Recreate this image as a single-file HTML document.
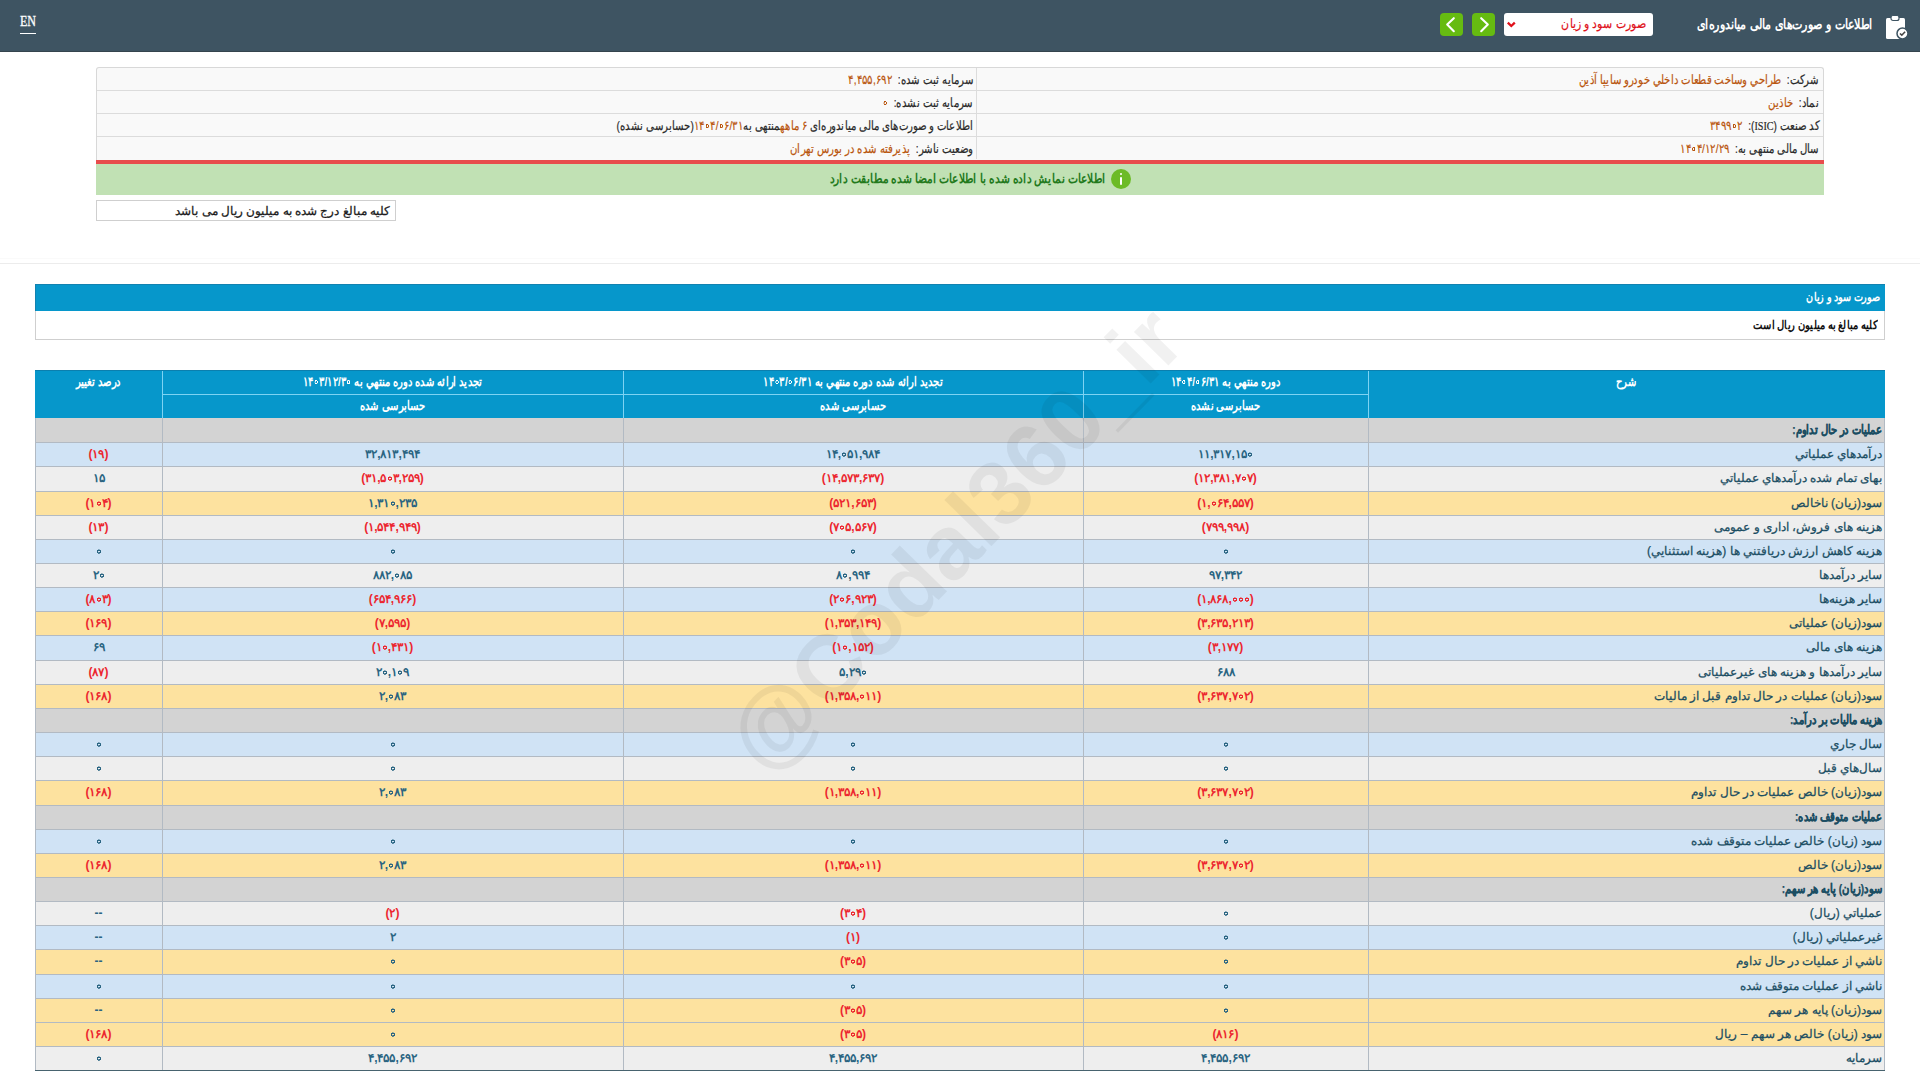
<!DOCTYPE html>
<html lang="fa"><head><meta charset="utf-8">
<style>
*{box-sizing:border-box;margin:0;padding:0}
html,body{width:1920px;height:1080px;overflow:hidden;background:#fff;font-family:"Liberation Sans",sans-serif;position:relative}
#hdr{position:absolute;left:0;top:0;width:1920px;height:52px;background:#3e5462;border-bottom:1px solid #35444d}
#en{position:absolute;left:20px;top:14px;font-family:"Liberation Serif",serif;color:#fff;font-size:14px;line-height:16px;transform:scaleX(0.86);transform-origin:0 50%;-webkit-text-stroke:0.3px #fff}
#enul{position:absolute;left:20px;top:32.5px;width:16px;height:1.6px;background:#fff}
#title{position:absolute;right:47px;top:13px;color:#fff;font-weight:bold;font-size:14px;line-height:22px;direction:rtl;white-space:nowrap;transform:scaleX(0.79);transform-origin:100% 50%}
#sel{position:absolute;left:1504px;top:13px;width:149px;height:23px;background:#fff;border-radius:3px}
#seltxt{position:absolute;right:7px;top:2px;color:#e0101a;-webkit-text-stroke:0.2px #e0101a;font-size:13px;line-height:18px;direction:rtl;white-space:nowrap;transform:scaleX(0.84);transform-origin:100% 50%}
.btn{position:absolute;top:13px;width:23px;height:23px;background:#66bb11;border-radius:4px}
.btn svg,#sel svg,#clip{position:absolute;left:0;top:0}
#info{position:absolute;left:96px;top:67px;width:1728px;height:93px;border:1px solid #d8d8d8;border-bottom:none;border-radius:3px 3px 0 0;background:#f9f9f9}
.irow{height:23px;border-top:1px solid #dcdcdc;position:relative}
.irow:first-child{border-top:none;height:22px}
.ic{position:absolute;top:0;height:100%;direction:rtl;white-space:nowrap;font-size:13px;line-height:24px;color:#2a2a2a;-webkit-text-stroke:0.2px #2a2a2a}
.ic .v{-webkit-text-stroke:0.2px #b9560f}
.ic span.t{display:inline-block;transform:scaleX(0.78);transform-origin:100% 50%}
.ic.r{left:879px;right:0;padding-right:4px;text-align:right;border-left:1px solid #dcdcdc}
.ic.l{left:0;width:879px;padding-right:3px;text-align:right}
.v{color:#b9560f}
#red{position:absolute;left:96px;top:160px;width:1728px;height:4px;background:#e84c4c}
#green{position:absolute;left:96px;top:164px;width:1728px;height:31px;background:#c1e1b4}
#gtxt{position:absolute;right:814px;top:168px;height:22px;color:#237a1c;font-weight:bold;font-size:13px;line-height:22px;direction:rtl;white-space:nowrap;transform:scaleX(0.82);transform-origin:100% 50%}
#gico{position:absolute;left:1111px;top:169px;width:20px;height:20px;border-radius:50%;background:#6cbb26}
#gico:before{content:"";position:absolute;left:9px;top:4px;width:2.4px;height:2.4px;background:#fff;border-radius:50%}
#gico:after{content:"";position:absolute;left:9px;top:8px;width:2.4px;height:8px;background:#fff;border-radius:1px}
#note{position:absolute;left:96px;top:200px;width:300px;height:21px;border:1px solid #cfcfcf;direction:rtl;text-align:right;padding-right:5px;font-size:12px;line-height:20px;color:#1a1a1a;-webkit-text-stroke:0.25px #1a1a1a}
#hr{position:absolute;left:0;top:263px;width:1920px;height:1px;background:#ececec}
#tbar{position:absolute;left:35px;top:284px;width:1850px;height:27px;background:#0697cb;border-top:1px solid #1282b0;border-left:1px solid #1282b0;color:#fff;font-weight:bold;direction:rtl;text-align:right;padding-right:5px;font-size:12px;line-height:25px}
#sub{position:absolute;left:35px;top:311px;width:1850px;height:29px;border:1px solid #cfcfcf;border-top:none;color:#111;font-weight:bold;direction:rtl;text-align:right;padding-right:6px;font-size:12px;line-height:28px}
#thead{position:absolute;left:35px;top:370px;width:1850px;height:48px;background:#0697cb;border-top:1px solid #0b7fae}
.hvl{position:absolute;top:371px;height:47px;width:1px;background:#7dd3f3}
.hhl{position:absolute;top:394px;height:1px;background:#7dd3f3}
.th{position:absolute;color:#fff;font-weight:bold;font-size:13px;line-height:22px;text-align:center;direction:rtl;white-space:nowrap;transform:scaleX(0.77)}
.tr{position:absolute;left:35px;width:1850px}
.td{position:absolute;top:0;height:100%;font-size:12px;line-height:24px;white-space:nowrap}
.td.d{text-align:right;padding-right:2px;color:#1a4d62;direction:rtl;-webkit-text-stroke:0.25px #1a4d62}
.td.d.b{font-weight:bold;font-size:13px;transform:scaleX(0.77);transform-origin:100% 50%}
.td.n{text-align:center;color:#2a6582;direction:ltr;font-weight:bold}
.td.r{color:#ec2730}
.hl{position:absolute;left:35px;width:1850px;height:1px;background:#b2bac3}
.hlb{position:absolute;left:35px;width:1850px;height:1px;background:#48636f}
.vl{position:absolute;width:1px;background:#b2bac3}
#wm{position:absolute;left:955px;top:539px;width:0;height:0}
#wm div{position:absolute;left:-400px;top:-60px;width:800px;text-align:center;font-family:"Liberation Sans",sans-serif;font-weight:bold;font-size:91px;line-height:120px;color:rgba(0,0,0,0.056);transform:rotate(-45.6deg);white-space:nowrap}
.z{-webkit-text-fill-color:transparent;-webkit-text-stroke:0;background:radial-gradient(circle at 48% 54%, transparent 0.8px, currentColor 1.1px, currentColor 1.9px, transparent 2.3px)}
</style></head><body>
<div id="hdr">
  <div id="en">EN</div><div id="enul"></div>
  <div id="title">اطلاعات و صورت‌های مالی میاندوره‌ای</div>
  <div id="sel"><svg width="149" height="23"><path d="M3.8 9.6 L7.3 13 L10.8 9.6" fill="none" stroke="#e0101a" stroke-width="2.3" stroke-linejoin="miter"/></svg><div id="seltxt">صورت سود و زیان</div></div>
  <div class="btn" style="left:1440px"><svg width="23" height="23"><path d="M13.8 5.2 L7.2 11.6 L13.8 18.2" fill="none" stroke="#fff" stroke-width="2.1" stroke-linecap="round" stroke-linejoin="round"/></svg></div>
  <div class="btn" style="left:1472px"><svg width="23" height="23"><path d="M9.2 5.2 L15.8 11.6 L9.2 18.2" fill="none" stroke="#fff" stroke-width="2.1" stroke-linecap="round" stroke-linejoin="round"/></svg></div>
  <svg id="clip" style="left:1884px;top:13px" width="26" height="28" viewBox="0 0 26 28">
    <rect x="2" y="5" width="19" height="21" rx="1.5" fill="#fff"/>
    <rect x="7" y="2.5" width="8" height="5" rx="2" fill="#fff" stroke="#3e5462" stroke-width="1.2"/>
    <circle cx="18.5" cy="20.5" r="5.5" fill="#fff" stroke="#3e5462" stroke-width="1.5"/>
    <path d="M16 20.5 L17.8 22.2 L21.1 18.8" fill="none" stroke="#444" stroke-width="1.6"/>
  </svg>
</div>
<div id="info">
  <div class="irow"><div class="ic r"><span class="t">شرکت:&nbsp; <span class="v">طراحي وساخت قطعات داخلي خودرو سايپا آذين</span></span></div><div class="ic l"><span class="t">سرمایه ثبت شده:&nbsp; <span class="v">۴,۴۵۵,۶۹۲</span></span></div></div>
  <div class="irow"><div class="ic r"><span class="t">نماد:&nbsp; <span class="v">خاذين</span></span></div><div class="ic l"><span class="t">سرمایه ثبت نشده:&nbsp; <span class="v"><span class="z">۰</span></span></span></div></div>
  <div class="irow"><div class="ic r"><span class="t">کد صنعت (<span style="font-family:'Liberation Serif',serif">ISIC</span>):&nbsp; <span class="v">۳۴۹۹<span class="z">۰</span>۲</span></span></div><div class="ic l"><span class="t">اطلاعات و صورت‌های مالی میاندوره‌ای <span class="v">۶ ماهه</span>منتهی به<span class="v">۱۴<span class="z">۰</span>۴/<span class="z">۰</span>۶/۳۱</span>(حسابرسی نشده)</span></div></div>
  <div class="irow"><div class="ic r"><span class="t">سال مالی منتهی به:&nbsp; <span class="v">۱۴<span class="z">۰</span>۴/۱۲/۲۹</span></span></div><div class="ic l"><span class="t">وضعیت ناشر:&nbsp; <span class="v">پذیرفته شده در بورس تهران</span></span></div></div>
</div>
<div id="red"></div>
<div id="green"></div>
<div id="gtxt">اطلاعات نمایش داده شده با اطلاعات امضا شده مطابقت دارد</div>
<div id="gico"></div>
<div id="note">کلیه مبالغ درج شده به میلیون ریال می باشد</div>
<div id="hr"></div><div style="position:absolute;left:0;top:258px;width:1920px;height:1px;background:#fafafa"></div>
<div id="tbar"><span style="display:inline-block;transform:scaleX(0.8);transform-origin:100% 50%">صورت سود و زیان</span></div>
<div id="sub"><span style="display:inline-block;transform:scaleX(0.83);transform-origin:100% 50%">کلیه مبالغ به میلیون ریال است</span></div>
<div id="thead"></div>
<div class="hvl" style="left:162px"></div>
<div class="hvl" style="left:623px"></div>
<div class="hvl" style="left:1083px"></div>
<div class="hvl" style="left:1368px"></div>
<div class="hhl" style="left:162px;width:1206px"></div>
<div class="th" style="left:1368px;width:516px;top:371px;height:23px">شرح</div>
<div class="th" style="left:1083px;width:285px;top:371px;height:23px">دوره منتهي به ۱۴<span class="z">۰</span>۴/<span class="z">۰</span>۶/۳۱</div>
<div class="th" style="left:623px;width:460px;top:371px;height:23px">تجدید ارائه شده دوره منتهي به ۱۴<span class="z">۰</span>۳/<span class="z">۰</span>۶/۳۱</div>
<div class="th" style="left:162px;width:461px;top:371px;height:23px">تجدید ارائه شده دوره منتهي به ۱۴<span class="z">۰</span>۳/۱۲/۳<span class="z">۰</span></div>
<div class="th" style="left:35px;width:127px;top:371px;height:23px">درصد تغییر</div>
<div class="th" style="left:1083px;width:285px;top:395px;height:23px">حسابرسی نشده</div>
<div class="th" style="left:623px;width:460px;top:395px;height:23px">حسابرسی شده</div>
<div class="th" style="left:162px;width:461px;top:395px;height:23px">حسابرسی شده</div>
<div class="tr" style="top:418px;height:24px;background:#d3d3d3">
<div class="td d b" style="left:1333px;width:516px">عملیات در حال تداوم:</div>
</div>
<div class="tr" style="top:442px;height:24px;background:#d0e3f5">
<div class="td d" style="left:1333px;width:516px">درآمدهاي عملياتي</div>
<div class="td n" style="left:1048px;width:285px">۱۱,۳۱۷,۱۵<span class="z">۰</span></div>
<div class="td n" style="left:588px;width:460px">۱۴,<span class="z">۰</span>۵۱,۹۸۴</div>
<div class="td n" style="left:127px;width:461px">۳۲,۸۱۳,۴۹۴</div>
<div class="td n r" style="left:0px;width:127px">(۱۹)</div>
</div>
<div class="tr" style="top:466px;height:25px;background:#eeeeee">
<div class="td d" style="left:1333px;width:516px">بهاى تمام شده درآمدهاي عملياتي</div>
<div class="td n r" style="left:1048px;width:285px">(۱۲,۳۸۱,۷<span class="z">۰</span>۷)</div>
<div class="td n r" style="left:588px;width:460px">(۱۴,۵۷۳,۶۳۷)</div>
<div class="td n r" style="left:127px;width:461px">(۳۱,۵<span class="z">۰</span>۳,۲۵۹)</div>
<div class="td n" style="left:0px;width:127px">۱۵</div>
</div>
<div class="tr" style="top:491px;height:24px;background:#fde29f">
<div class="td d" style="left:1333px;width:516px">سود(زیان) ناخالص</div>
<div class="td n r" style="left:1048px;width:285px">(۱,<span class="z">۰</span>۶۴,۵۵۷)</div>
<div class="td n r" style="left:588px;width:460px">(۵۲۱,۶۵۳)</div>
<div class="td n" style="left:127px;width:461px">۱,۳۱<span class="z">۰</span>,۲۳۵</div>
<div class="td n r" style="left:0px;width:127px">(۱<span class="z">۰</span>۴)</div>
</div>
<div class="tr" style="top:515px;height:24px;background:#eeeeee">
<div class="td d" style="left:1333px;width:516px">هزینه های فروش، اداری و عمومی</div>
<div class="td n r" style="left:1048px;width:285px">(۷۹۹,۹۹۸)</div>
<div class="td n r" style="left:588px;width:460px">(۷<span class="z">۰</span>۵,۵۶۷)</div>
<div class="td n r" style="left:127px;width:461px">(۱,۵۴۴,۹۴۹)</div>
<div class="td n r" style="left:0px;width:127px">(۱۳)</div>
</div>
<div class="tr" style="top:539px;height:24px;background:#d0e3f5">
<div class="td d" style="left:1333px;width:516px">هزینه کاهش ارزش دريافتني ها (هزينه استثنايي)</div>
<div class="td n" style="left:1048px;width:285px"><span class="z">۰</span></div>
<div class="td n" style="left:588px;width:460px"><span class="z">۰</span></div>
<div class="td n" style="left:127px;width:461px"><span class="z">۰</span></div>
<div class="td n" style="left:0px;width:127px"><span class="z">۰</span></div>
</div>
<div class="tr" style="top:563px;height:24px;background:#eeeeee">
<div class="td d" style="left:1333px;width:516px">سایر درآمدها</div>
<div class="td n" style="left:1048px;width:285px">۹۷,۳۴۲</div>
<div class="td n" style="left:588px;width:460px">۸<span class="z">۰</span>,۹۹۴</div>
<div class="td n" style="left:127px;width:461px">۸۸۲,<span class="z">۰</span>۸۵</div>
<div class="td n" style="left:0px;width:127px">۲<span class="z">۰</span></div>
</div>
<div class="tr" style="top:587px;height:24px;background:#d0e3f5">
<div class="td d" style="left:1333px;width:516px">سایر هزینه‌ها</div>
<div class="td n r" style="left:1048px;width:285px">(۱,۸۶۸,<span class="z">۰</span><span class="z">۰</span><span class="z">۰</span>)</div>
<div class="td n r" style="left:588px;width:460px">(۲<span class="z">۰</span>۶,۹۲۳)</div>
<div class="td n r" style="left:127px;width:461px">(۶۵۴,۹۶۶)</div>
<div class="td n r" style="left:0px;width:127px">(۸<span class="z">۰</span>۳)</div>
</div>
<div class="tr" style="top:611px;height:24px;background:#fde29f">
<div class="td d" style="left:1333px;width:516px">سود(زیان) عملیاتی</div>
<div class="td n r" style="left:1048px;width:285px">(۳,۶۳۵,۲۱۳)</div>
<div class="td n r" style="left:588px;width:460px">(۱,۳۵۳,۱۴۹)</div>
<div class="td n r" style="left:127px;width:461px">(۷,۵۹۵)</div>
<div class="td n r" style="left:0px;width:127px">(۱۶۹)</div>
</div>
<div class="tr" style="top:635px;height:25px;background:#d0e3f5">
<div class="td d" style="left:1333px;width:516px">هزینه های مالی</div>
<div class="td n r" style="left:1048px;width:285px">(۳,۱۷۷)</div>
<div class="td n r" style="left:588px;width:460px">(۱<span class="z">۰</span>,۱۵۲)</div>
<div class="td n r" style="left:127px;width:461px">(۱<span class="z">۰</span>,۴۳۱)</div>
<div class="td n" style="left:0px;width:127px">۶۹</div>
</div>
<div class="tr" style="top:660px;height:24px;background:#eeeeee">
<div class="td d" style="left:1333px;width:516px">سایر درآمدها و هزینه های غیرعملیاتی</div>
<div class="td n" style="left:1048px;width:285px">۶۸۸</div>
<div class="td n" style="left:588px;width:460px">۵,۲۹<span class="z">۰</span></div>
<div class="td n" style="left:127px;width:461px">۲<span class="z">۰</span>,۱<span class="z">۰</span>۹</div>
<div class="td n r" style="left:0px;width:127px">(۸۷)</div>
</div>
<div class="tr" style="top:684px;height:24px;background:#fde29f">
<div class="td d" style="left:1333px;width:516px">سود(زیان) عملیات در حال تداوم قبل از مالیات</div>
<div class="td n r" style="left:1048px;width:285px">(۳,۶۳۷,۷<span class="z">۰</span>۲)</div>
<div class="td n r" style="left:588px;width:460px">(۱,۳۵۸,<span class="z">۰</span>۱۱)</div>
<div class="td n" style="left:127px;width:461px">۲,<span class="z">۰</span>۸۳</div>
<div class="td n r" style="left:0px;width:127px">(۱۶۸)</div>
</div>
<div class="tr" style="top:708px;height:24px;background:#d3d3d3">
<div class="td d b" style="left:1333px;width:516px">هزینه مالیات بر درآمد:</div>
</div>
<div class="tr" style="top:732px;height:24px;background:#d0e3f5">
<div class="td d" style="left:1333px;width:516px">سال جاري</div>
<div class="td n" style="left:1048px;width:285px"><span class="z">۰</span></div>
<div class="td n" style="left:588px;width:460px"><span class="z">۰</span></div>
<div class="td n" style="left:127px;width:461px"><span class="z">۰</span></div>
<div class="td n" style="left:0px;width:127px"><span class="z">۰</span></div>
</div>
<div class="tr" style="top:756px;height:24px;background:#eeeeee">
<div class="td d" style="left:1333px;width:516px">سال‌هاي قبل</div>
<div class="td n" style="left:1048px;width:285px"><span class="z">۰</span></div>
<div class="td n" style="left:588px;width:460px"><span class="z">۰</span></div>
<div class="td n" style="left:127px;width:461px"><span class="z">۰</span></div>
<div class="td n" style="left:0px;width:127px"><span class="z">۰</span></div>
</div>
<div class="tr" style="top:780px;height:25px;background:#fde29f">
<div class="td d" style="left:1333px;width:516px">سود(زیان) خالص عملیات در حال تداوم</div>
<div class="td n r" style="left:1048px;width:285px">(۳,۶۳۷,۷<span class="z">۰</span>۲)</div>
<div class="td n r" style="left:588px;width:460px">(۱,۳۵۸,<span class="z">۰</span>۱۱)</div>
<div class="td n" style="left:127px;width:461px">۲,<span class="z">۰</span>۸۳</div>
<div class="td n r" style="left:0px;width:127px">(۱۶۸)</div>
</div>
<div class="tr" style="top:805px;height:24px;background:#d3d3d3">
<div class="td d b" style="left:1333px;width:516px">عملیات متوقف شده:</div>
</div>
<div class="tr" style="top:829px;height:24px;background:#d0e3f5">
<div class="td d" style="left:1333px;width:516px">سود (زیان) خالص عملیات متوقف شده</div>
<div class="td n" style="left:1048px;width:285px"><span class="z">۰</span></div>
<div class="td n" style="left:588px;width:460px"><span class="z">۰</span></div>
<div class="td n" style="left:127px;width:461px"><span class="z">۰</span></div>
<div class="td n" style="left:0px;width:127px"><span class="z">۰</span></div>
</div>
<div class="tr" style="top:853px;height:24px;background:#fde29f">
<div class="td d" style="left:1333px;width:516px">سود(زیان) خالص</div>
<div class="td n r" style="left:1048px;width:285px">(۳,۶۳۷,۷<span class="z">۰</span>۲)</div>
<div class="td n r" style="left:588px;width:460px">(۱,۳۵۸,<span class="z">۰</span>۱۱)</div>
<div class="td n" style="left:127px;width:461px">۲,<span class="z">۰</span>۸۳</div>
<div class="td n r" style="left:0px;width:127px">(۱۶۸)</div>
</div>
<div class="tr" style="top:877px;height:24px;background:#d3d3d3">
<div class="td d b" style="left:1333px;width:516px">سود(زیان) پایه هر سهم:</div>
</div>
<div class="tr" style="top:901px;height:24px;background:#eeeeee">
<div class="td d" style="left:1333px;width:516px">عملياتي (ريال)</div>
<div class="td n" style="left:1048px;width:285px"><span class="z">۰</span></div>
<div class="td n r" style="left:588px;width:460px">(۳<span class="z">۰</span>۴)</div>
<div class="td n r" style="left:127px;width:461px">(۲)</div>
<div class="td n" style="left:0px;width:127px">--</div>
</div>
<div class="tr" style="top:925px;height:24px;background:#d0e3f5">
<div class="td d" style="left:1333px;width:516px">غيرعملياتي (ريال)</div>
<div class="td n" style="left:1048px;width:285px"><span class="z">۰</span></div>
<div class="td n r" style="left:588px;width:460px">(۱)</div>
<div class="td n" style="left:127px;width:461px">۲</div>
<div class="td n" style="left:0px;width:127px">--</div>
</div>
<div class="tr" style="top:949px;height:25px;background:#fde29f">
<div class="td d" style="left:1333px;width:516px">ناشي از عمليات در حال تداوم</div>
<div class="td n" style="left:1048px;width:285px"><span class="z">۰</span></div>
<div class="td n r" style="left:588px;width:460px">(۳<span class="z">۰</span>۵)</div>
<div class="td n" style="left:127px;width:461px"><span class="z">۰</span></div>
<div class="td n" style="left:0px;width:127px">--</div>
</div>
<div class="tr" style="top:974px;height:24px;background:#d0e3f5">
<div class="td d" style="left:1333px;width:516px">ناشي از عمليات متوقف شده</div>
<div class="td n" style="left:1048px;width:285px"><span class="z">۰</span></div>
<div class="td n" style="left:588px;width:460px"><span class="z">۰</span></div>
<div class="td n" style="left:127px;width:461px"><span class="z">۰</span></div>
<div class="td n" style="left:0px;width:127px"><span class="z">۰</span></div>
</div>
<div class="tr" style="top:998px;height:24px;background:#fde29f">
<div class="td d" style="left:1333px;width:516px">سود(زیان) پایه هر سهم</div>
<div class="td n" style="left:1048px;width:285px"><span class="z">۰</span></div>
<div class="td n r" style="left:588px;width:460px">(۳<span class="z">۰</span>۵)</div>
<div class="td n" style="left:127px;width:461px"><span class="z">۰</span></div>
<div class="td n" style="left:0px;width:127px">--</div>
</div>
<div class="tr" style="top:1022px;height:24px;background:#fde29f">
<div class="td d" style="left:1333px;width:516px">سود (زیان) خالص هر سهم – ریال</div>
<div class="td n r" style="left:1048px;width:285px">(۸۱۶)</div>
<div class="td n r" style="left:588px;width:460px">(۳<span class="z">۰</span>۵)</div>
<div class="td n" style="left:127px;width:461px"><span class="z">۰</span></div>
<div class="td n r" style="left:0px;width:127px">(۱۶۸)</div>
</div>
<div class="tr" style="top:1046px;height:24px;background:#eeeeee">
<div class="td d" style="left:1333px;width:516px">سرمایه</div>
<div class="td n" style="left:1048px;width:285px">۴,۴۵۵,۶۹۲</div>
<div class="td n" style="left:588px;width:460px">۴,۴۵۵,۶۹۲</div>
<div class="td n" style="left:127px;width:461px">۴,۴۵۵,۶۹۲</div>
<div class="td n" style="left:0px;width:127px"><span class="z">۰</span></div>
</div>
<div class="hl" style="top:442px"></div>
<div class="hl" style="top:466px"></div>
<div class="hl" style="top:491px"></div>
<div class="hl" style="top:515px"></div>
<div class="hl" style="top:539px"></div>
<div class="hl" style="top:563px"></div>
<div class="hl" style="top:587px"></div>
<div class="hl" style="top:611px"></div>
<div class="hl" style="top:635px"></div>
<div class="hl" style="top:660px"></div>
<div class="hl" style="top:684px"></div>
<div class="hl" style="top:708px"></div>
<div class="hl" style="top:732px"></div>
<div class="hl" style="top:756px"></div>
<div class="hl" style="top:780px"></div>
<div class="hl" style="top:805px"></div>
<div class="hl" style="top:829px"></div>
<div class="hl" style="top:853px"></div>
<div class="hl" style="top:877px"></div>
<div class="hl" style="top:901px"></div>
<div class="hl" style="top:925px"></div>
<div class="hl" style="top:949px"></div>
<div class="hl" style="top:974px"></div>
<div class="hl" style="top:998px"></div>
<div class="hl" style="top:1022px"></div>
<div class="hl" style="top:1046px"></div>
<div class="hlb" style="top:1070px"></div>
<div class="vl" style="left:35px;top:418px;height:652px"></div>
<div class="vl" style="left:162px;top:418px;height:652px"></div>
<div class="vl" style="left:623px;top:418px;height:652px"></div>
<div class="vl" style="left:1083px;top:418px;height:652px"></div>
<div class="vl" style="left:1368px;top:418px;height:652px"></div>
<div class="vl" style="left:1884px;top:418px;height:652px"></div>
<div id="wm"><div>@Codal360_ir</div></div>
</body></html>
